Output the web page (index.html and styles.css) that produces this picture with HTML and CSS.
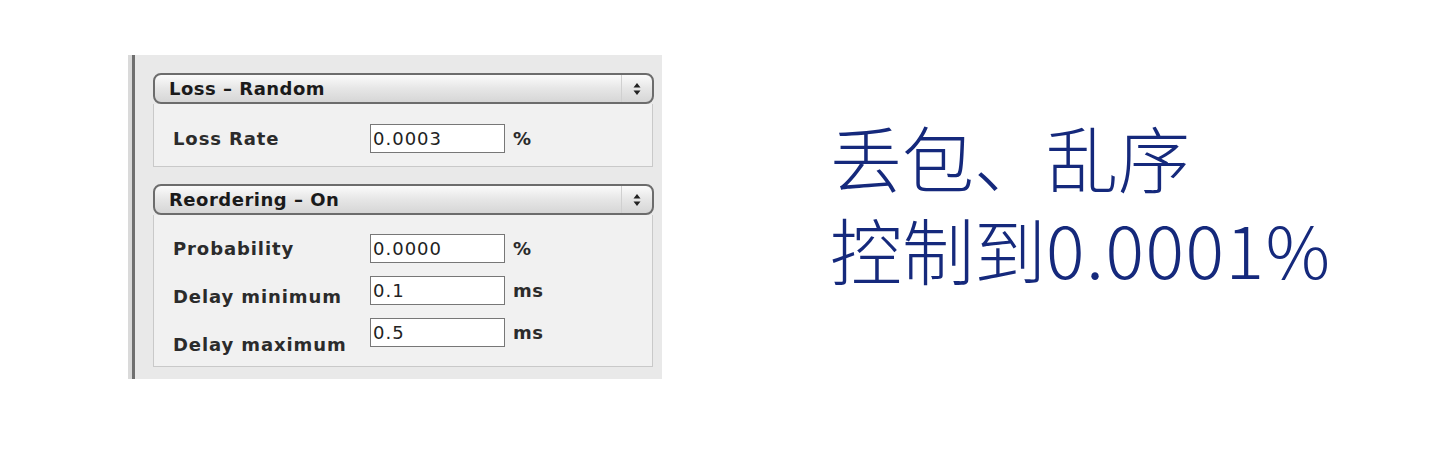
FILE: index.html
```html
<!DOCTYPE html>
<html lang="zh-CN">
<head>
    <meta charset="UTF-8">
    <title>丢包、乱序</title>
    <link rel="stylesheet" href="styles.css">
</head>
<body>
    <div class="page">
        <div class="panel">
            <div class="group">
                <div class="select-bar">
                    <span class="select-label">Loss – Random</span>
                    <span class="select-arrows">
                        <svg width="8" height="14" viewBox="0 0 8 14"><path d="M4 1 L7.5 5.5 H0.5 Z M4 13 L7.5 8.5 H0.5 Z" fill="#222"/></svg>
                    </span>
                </div>
                <div class="group-body">
                    <div class="row">
                        <span class="label">Loss Rate</span>
                        <input class="field" type="text" value="0.0003">
                        <span class="unit">%</span>
                    </div>
                </div>
            </div>
            <div class="group">
                <div class="select-bar">
                    <span class="select-label">Reordering – On</span>
                    <span class="select-arrows">
                        <svg width="8" height="14" viewBox="0 0 8 14"><path d="M4 1 L7.5 5.5 H0.5 Z M4 13 L7.5 8.5 H0.5 Z" fill="#222"/></svg>
                    </span>
                </div>
                <div class="group-body tall">
                    <div class="row">
                        <span class="label">Probability</span>
                        <input class="field" type="text" value="0.0000">
                        <span class="unit">%</span>
                    </div>
                    <div class="row">
                        <span class="label low">Delay minimum</span>
                        <input class="field" type="text" value="0.1">
                        <span class="unit">ms</span>
                    </div>
                    <div class="row">
                        <span class="label lower">Delay maximum</span>
                        <input class="field" type="text" value="0.5">
                        <span class="unit">ms</span>
                    </div>
                </div>
            </div>
        </div>
        <div class="caption">
            <div class="caption-line">丢包、乱序</div>
            <div class="caption-line">控制到<span class="num">0.0001%</span></div>
        </div>
    </div>
</body>
</html>
```

FILE: styles.css
```css
body {
    margin: 0;
    background-color: #fff;
    font-family: 'DejaVu Sans', sans-serif;
}
.page {
    display: flex;
    align-items: flex-start;
    padding: 55px 0 0 128px;
}
.panel {
    width: 534px;
    height: 324px;
    box-sizing: border-box;
    padding: 18px 9px 0 25px;
    background-color: #e9e9e9;
    box-shadow: inset 4px 0 0 #dadada, inset 7px 0 0 #6f6f6f;
    display: flex;
    flex-direction: column;
    gap: 17px;
}
.group {
    width: 501px;
}
.select-bar {
    height: 31px;
    box-sizing: border-box;
    border: 2px solid #6c6c6c;
    border-radius: 8px;
    background: linear-gradient(#fbfbfb, #e6e6e6 50%, #d6d6d6);
    display: flex;
    align-items: center;
    justify-content: space-between;
}
.select-label {
    padding-left: 14px;
    font-size: 18px;
    font-weight: bold;
    letter-spacing: 0.5px;
    color: #1a1a1a;
}
.select-arrows {
    width: 30px;
    height: 100%;
    border-left: 1px solid #d0d0d0;
    display: flex;
    align-items: center;
    justify-content: center;
}
.group-body {
    width: 500px;
    height: 63px;
    box-sizing: border-box;
    background-color: #f1f1f1;
    border: 1px solid #c9c9c9;
    border-top: none;
    padding: 20px 0 0 19px;
    display: flex;
    flex-direction: column;
    gap: 13px;
}
.group-body.tall {
    height: 152px;
    padding-top: 19px;
}
.row {
    display: flex;
    align-items: center;
    height: 29px;
}
.label {
    width: 197px;
    flex-shrink: 0;
    font-size: 18px;
    font-weight: bold;
    letter-spacing: 0.9px;
    color: #2b2b2b;
}
.label.low {
    padding-top: 12px;
}
.label.lower {
    padding-top: 24px;
}
.field {
    width: 135px;
    height: 29px;
    box-sizing: border-box;
    margin: 0;
    padding: 0 2px;
    border: 1px solid #777;
    background-color: #fff;
    font-family: 'DejaVu Sans', sans-serif;
    font-size: 18px;
    letter-spacing: 1px;
    color: #222;
    outline: none;
}
.unit {
    margin-left: 8px;
    font-size: 18px;
    font-weight: bold;
    letter-spacing: 0.5px;
    color: #2b2b2b;
}
.caption {
    margin-left: 168px;
    margin-top: 55px;
    font-family: 'Noto Sans CJK SC', sans-serif;
    font-size: 72px;
    font-weight: 300;
    line-height: 92px;
    color: #15297c;
}
.num {
    letter-spacing: 1.5px;
}
```
